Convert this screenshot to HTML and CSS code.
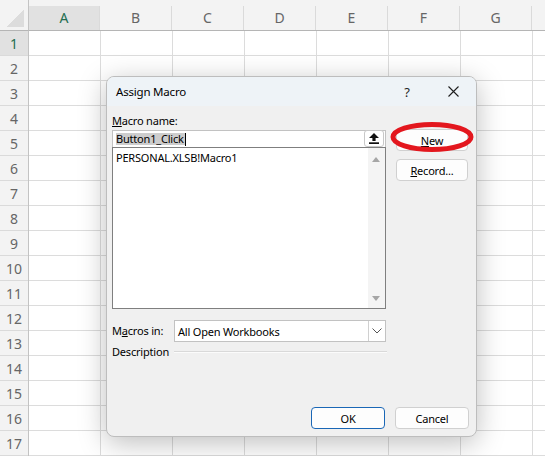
FILE: index.html
```html
<!DOCTYPE html>
<html lang="en">
<head>
    <meta charset="UTF-8">
    <title>Assign Macro</title>
    <link rel="stylesheet" href="styles.css">
</head>
<body>
    <div class="sheet">
        <div class="corner"><span class="corner-tri"></span></div>
        <div class="col-heads">
            <div class="ch selected">A</div>
            <div class="ch">B</div>
            <div class="ch">C</div>
            <div class="ch">D</div>
            <div class="ch">E</div>
            <div class="ch">F</div>
            <div class="ch">G</div>
            <div class="ch"></div>
        </div>
        <div class="row-heads">
            <div class="rh selected">1</div>
            <div class="rh">2</div>
            <div class="rh">3</div>
            <div class="rh">4</div>
            <div class="rh">5</div>
            <div class="rh">6</div>
            <div class="rh">7</div>
            <div class="rh">8</div>
            <div class="rh">9</div>
            <div class="rh">10</div>
            <div class="rh">11</div>
            <div class="rh">12</div>
            <div class="rh">13</div>
            <div class="rh">14</div>
            <div class="rh">15</div>
            <div class="rh">16</div>
            <div class="rh">17</div>
        </div>
        <div class="cells"></div>
    </div>

    <div class="dialog">
        <div class="title-bar">
            <span class="title">Assign Macro</span>
            <span class="cap-btn help">?</span>
            <span class="cap-btn close">
                <svg width="11" height="11" viewBox="0 0 11 11"><path d="M0.5 0.5 L10.5 10.5 M10.5 0.5 L0.5 10.5" stroke="#1f1f1f" stroke-width="1.1"/></svg>
            </span>
        </div>

        <div class="dlg-body">
            <div class="top">
                <div class="main-col">
                    <div class="label"><u>M</u>acro name:</div>
                    <div class="name-input">
                        <span class="sel-text">Button1_Click</span><span class="caret"></span>
                        <span class="ref-btn">
                            <svg width="10" height="11" viewBox="0 0 10 11"><path d="M5 0 L10 5 H6.6 V8 H3.4 V5 H0 Z" fill="#111"/><rect x="0" y="9.3" width="10" height="1.7" fill="#111"/></svg>
                        </span>
                    </div>
                    <div class="macro-list">
                        <div class="list-item">PERSONAL.XLSB!Macro1</div>
                        <div class="scroll-track">
                            <span class="arrow-up"></span>
                            <span class="arrow-down"></span>
                        </div>
                    </div>
                </div>
                <div class="side-col">
                    <button class="btn btn-new"><u>N</u>ew</button>
                    <button class="btn"><u>R</u>ecord...</button>
                    <svg class="red-ring" width="88" height="34" viewBox="0 0 88 34"><ellipse cx="44" cy="17" rx="39" ry="12.6" fill="none" stroke="#e3171e" stroke-width="5"/></svg>
                </div>
            </div>

            <div class="macros-in">
                <span class="label">M<u>a</u>cros in:</span>
                <div class="combo">
                    <span class="combo-text">All Open Workbooks</span>
                    <span class="combo-btn">
                        <svg width="10" height="6" viewBox="0 0 10 6"><path d="M0.5 0.5 L5 5 L9.5 0.5" fill="none" stroke="#555" stroke-width="1"/></svg>
                    </span>
                </div>
            </div>

            <div class="desc-row">
                <span class="label">Description</span>
                <span class="desc-line"></span>
            </div>

            <div class="footer">
                <button class="btn btn-ok">OK</button>
                <button class="btn btn-cancel">Cancel</button>
            </div>
        </div>
    </div>
</body>
</html>
```

FILE: styles.css
```css
* {
    margin: 0;
    padding: 0;
    box-sizing: border-box;
}

body {
    width: 545px;
    height: 456px;
    overflow: hidden;
    font-family: 'Noto Sans', 'Open Sans', sans-serif;
    background-color: #ffffff;
    position: relative;
}

/* spreadsheet */
.sheet {
    display: grid;
    grid-template-columns: 29px 1fr;
    grid-template-rows: 31px 1fr;
    height: 456px;
}

.corner {
    background-color: #f3f3f3;
    border-right: 1px solid #c3c3c3;
    border-bottom: 1px solid #b5b5b5;
    padding: 10px 4px 3px 7px;
}

.corner-tri {
    display: block;
    width: 17px;
    height: 17px;
    background: linear-gradient(to bottom right, transparent 50%, #dcdcdc 50%);
}

.col-heads {
    display: flex;
    overflow: hidden;
    background-color: #f3f3f3;
    padding-top: 6px;
    border-bottom: 1px solid #b5b5b5;
}

.ch {
    flex: 0 0 72px;
    border-right: 1px solid #dadada;
    text-align: center;
    font-size: 14px;
    line-height: 24px;
    color: #666;
}

.ch:first-child {
    flex-basis: 71px;
}

.ch.selected,
.rh.selected {
    background-color: #e1e1e1;
    color: #1f6e50;
}

.row-heads {
    background-color: #f3f3f3;
    border-right: 1px solid #c3c3c3;
}

.rh {
    height: 25px;
    border-bottom: 1px solid #dadada;
    text-align: center;
    font-size: 14px;
    line-height: 25px;
    color: #666;
}

.cells {
    background-color: #fff;
    background-image:
        linear-gradient(to bottom, transparent 24px, #dcdcdc 24px),
        linear-gradient(to right, transparent 71px, #dcdcdc 71px);
    background-size: 100% 25px, 72px 100%;
}

/* dialog */
.dialog {
    position: absolute;
    left: 106px;
    top: 76px;
    width: 371px;
    height: 361px;
    display: flex;
    flex-direction: column;
    background-color: #f0f0f0;
    border: 1px solid #bdbdbd;
    border-radius: 8px;
    box-shadow: 0 6px 28px rgba(0, 0, 0, 0.26);
    overflow: hidden;
    font-size: 11px;
    letter-spacing: -0.2px;
    color: #000;
}

.title-bar {
    display: flex;
    align-items: center;
    height: 29px;
    padding-left: 9px;
    background-color: #eef3f7;
}

.title {
    flex: 1;
    font-size: 11.5px;
}

.cap-btn {
    width: 46px;
    height: 29px;
    display: flex;
    align-items: center;
    justify-content: center;
}

.help {
    font-size: 13px;
    color: #1f1f1f;
}

.dlg-body {
    flex: 1;
    display: flex;
    flex-direction: column;
    padding: 7px 8px 7px 5px;
}

.top {
    display: grid;
    grid-template-columns: 274px 72px;
    column-gap: 10px;
}

.label {
    line-height: 16px;
    white-space: nowrap;
}

.main-col .label {
    margin-bottom: 1px;
}

.name-input {
    position: relative;
    height: 17px;
    display: flex;
    align-items: center;
    padding-left: 3px;
    background-color: #fff;
    border: 1px solid #c2c2c2;
    border-bottom: none;
}

.sel-text {
    background-color: #cdcdcd;
    line-height: 12px;
    padding-right: 1px;
}

.caret {
    width: 1px;
    height: 13px;
    background-color: #000;
}

.ref-btn {
    position: absolute;
    right: 1px;
    top: -1px;
    width: 20px;
    height: 17px;
    display: flex;
    align-items: center;
    justify-content: center;
    background-color: #fff;
    border: 1px solid #c8c8c8;
    border-radius: 3px;
}

.macro-list {
    position: relative;
    height: 162px;
    background-color: #fff;
    border: 1px solid #7f7f7f;
}

.list-item {
    padding: 2px 0 0 3px;
    line-height: 16px;
}

.scroll-track {
    position: absolute;
    top: 0;
    right: 0;
    bottom: 0;
    width: 17px;
    background-color: #f4f4f4;
}

.arrow-up,
.arrow-down {
    position: absolute;
    left: 4px;
    width: 0;
    height: 0;
    border-left: 4px solid transparent;
    border-right: 4px solid transparent;
}

.arrow-up {
    top: 9px;
    border-bottom: 5px solid #a6a6a6;
}

.arrow-down {
    bottom: 7px;
    border-top: 5px solid #a6a6a6;
}

.side-col {
    position: relative;
    display: flex;
    flex-direction: column;
    gap: 8px;
    padding-top: 16px;
}

.btn {
    height: 22px;
    font-family: inherit;
    font-size: 11px;
    letter-spacing: -0.2px;
    color: #000;
    background-color: #fdfdfd;
    border: 1px solid #d0d0d0;
    border-radius: 4px;
}

.red-ring {
    position: absolute;
    left: -8px;
    top: 7px;
}

.macros-in {
    display: flex;
    align-items: center;
    margin-top: 11px;
}

.macros-in .label {
    width: 62px;
}

.combo {
    width: 212px;
    height: 22px;
    display: flex;
    align-items: center;
    background-color: #fff;
    border: 1px solid #c2c2c2;
}

.combo-text {
    flex: 1;
    padding-left: 3px;
}

.combo-btn {
    width: 17px;
    height: 20px;
    display: flex;
    align-items: center;
    justify-content: center;
    border-left: 1px solid #d0d0d0;
}

.desc-row {
    display: flex;
    align-items: center;
    gap: 5px;
    width: 275px;
    height: 18px;
    margin-top: 1px;
}

.desc-line {
    flex: 1;
    height: 2px;
    border-top: 1px solid #d9d9d9;
    border-bottom: 1px solid #fbfbfb;
}

.footer {
    margin-top: auto;
    display: flex;
    justify-content: flex-end;
    gap: 10px;
    margin-right: -1px;
}

.footer .btn {
    width: 74px;
}

.btn-ok {
    border-color: #1a67b6;
}
```
